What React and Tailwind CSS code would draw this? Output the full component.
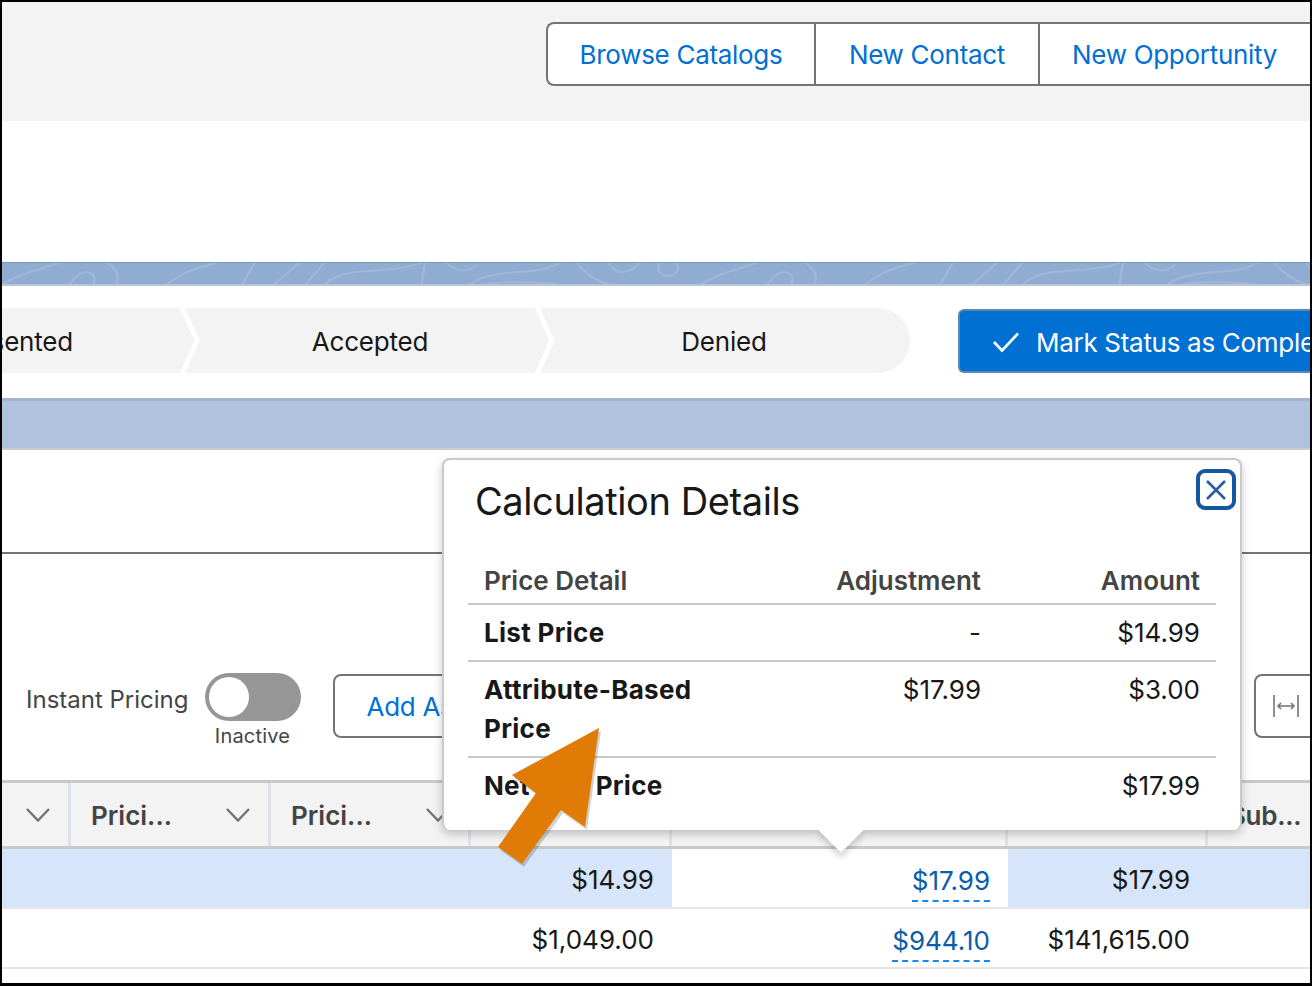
const FONT = "font-['Inter','Liberation_Sans',sans-serif]";

function Chevron({ className = "" }) {
  return (
    <svg width="26" height="16" viewBox="0 0 26 16" className={className} fill="none">
      <path d="M2 2 L13 13.5 L24 2" stroke="#747474" strokeWidth="2.4" />
    </svg>
  );
}

function Contours() {
  const tile = [
    "M0 22 C10 13 25 8 45 0",
    "M53 22 Q62 6 70 10 Q75 14 72 22",
    "M84 0 Q95 10 90 22",
    "M130 22 Q145 6 170 0",
    "M190 22 L200 0",
    "M215 22 L235 0",
    "M240 22 L255 0",
    "M255 22 Q265 9 290 8 Q320 6 332 0",
    "M332 22 L335 0",
    "M352 0 Q365 14 376 2",
    "M370 22 Q380 10 420 8 Q432 6 442 0",
    "M380 22 Q400 16 445 22",
    "M455 0 Q470 22 488 22",
    "M480 0 Q490 18 505 0",
    "M520 0 Q518 14 530 13 Q538 8 534 0",
  ];
  return (
    <svg width="1400" height="22" viewBox="0 0 1400 22" fill="none" className="block">
      {[0, 698].map((x) => (
        <g key={x} transform={`translate(${x} 0) scale(1.263 1)`}>
          {tile.map((d) => (
            <path key={d} d={d} stroke="#a0b8d7" strokeWidth="1.8" />
          ))}
        </g>
      ))}
    </svg>
  );
}

function PathStep({ children, className = "" }) {
  return (
    <div className={`relative flex h-full items-center whitespace-nowrap pt-[2px] text-[26px] tracking-[-0.2px] text-[#181818] ${className}`}>
      {children}
    </div>
  );
}

function Separator() {
  return (
    <svg width="24" height="65" viewBox="0 0 24 65" fill="none" className="absolute right-[-12px] top-0 z-10">
      <path d="M3 -1 L18 32.5 L3 66" stroke="#ffffff" strokeWidth="5" />
    </svg>
  );
}

function HeaderCell({ label, chevron, className = "" }) {
  return (
    <div className={`flex items-center justify-between border-r-[3px] border-[#dfe3e8] pt-[1px] ${className}`}>
      {label ? <span className="text-[26px] font-semibold text-[#444444]">{label}</span> : <span />}
      {chevron ? <Chevron /> : null}
    </div>
  );
}

function Amount({ children, className = "" }) {
  return <div className={`flex items-center justify-end pr-[18px] pt-[2px] text-[26px] text-[#181818] ${className}`}>{children}</div>;
}

function DashedLink({ children }) {
  return (
    <span className="mt-[6px] border-b-2 border-dashed border-[#1589ee] text-[26px] leading-[38px] text-[#0b5cab]">{children}</span>
  );
}

const gridCols = "grid grid-cols-[69px_200px_200px_201px_336px_200px_1fr]";
const popRow = "grid grid-cols-[282px_231px_1fr] border-b-2 border-[#c9c9c9] text-[26px] leading-[39px]";

function Popover() {
  return (
    <div className="absolute left-[440px] top-[456px] z-20 h-[372px] w-[800px] rounded-lg border-2 border-b-0 border-[#c9c9c9] bg-white shadow-[0_4px_10px_rgba(0,0,0,0.22)]">
      <div
        className="absolute bottom-[-16px] left-[381px] h-[32px] w-[32px] rotate-45 bg-white shadow-[4px_4px_6px_rgba(0,0,0,0.16)]"
      />
      <div className="relative flex h-full flex-col rounded-lg bg-white px-6 pt-[17px]">
        <div className="flex items-start justify-between">
          <h2 className="pl-[7px] text-[38px] leading-[48px] font-normal tracking-[-0.4px] text-[#181818]">Calculation Details</h2>
          <button className="mr-[-20px] mt-[-8px] flex h-[41px] w-[40px] items-center justify-center rounded-[9px] border-4 border-[#14569f] bg-white">
            <svg width="22" height="22" viewBox="0 0 22 22" fill="none">
              <path d="M2 2 L20 20 M20 2 L2 20" stroke="#2a5d9f" strokeWidth="2.6" />
            </svg>
          </button>
        </div>
        <div className="mt-[36px]">
          <div className={`${popRow} h-[44px] font-semibold text-[#444444]`}>
            <div className="pl-4">Price Detail</div>
            <div className="text-right">Adjustment</div>
            <div className="pr-4 text-right">Amount</div>
          </div>
          <div className={`${popRow} h-[57px] items-center text-[#181818]`}>
            <div className="pl-4 font-bold tracking-[0.3px]">List Price</div>
            <div className="text-right">-</div>
            <div className="pr-4 text-right">$14.99</div>
          </div>
          <div className={`${popRow} h-[96px] pt-[8px] text-[#181818]`}>
            <div className="pl-4 font-bold tracking-[0.3px]">
              Attribute-Based
              <br />
              Price
            </div>
            <div className="text-right">$17.99</div>
            <div className="pr-4 text-right">$3.00</div>
          </div>
          <div className="grid h-[57px] grid-cols-[282px_231px_1fr] items-center pb-[2px] text-[26px] leading-[39px] text-[#181818]">
            <div className="pl-4 font-bold tracking-[0.3px]">Net Unit Price</div>
            <div />
            <div className="pr-4 text-right">$17.99</div>
          </div>
        </div>
      </div>
    </div>
  );
}

function OrangeArrow() {
  return (
    <svg width="1308" height="981" viewBox="2 2 1308 981" className="pointer-events-none absolute left-0 top-0 z-30" fill="none">
      <path d="M599 728 L512 775 L536 793 L498 847 L522 864 L561 810 L585 827 Z" fill="rgba(0,0,0,0.18)" transform="translate(2 3)" />
      <path d="M599 728 L512 775 L536 793 L498 847 L522 864 L561 810 L585 827 Z" fill="#e07c05" />
    </svg>
  );
}

export default function App() {
  return (
    <div className={`h-[986px] w-[1312px] overflow-hidden border-2 border-b-[3px] border-black bg-white ${FONT}`}>
      <div className="relative flex h-full flex-col">
        <section className="flex h-[119px] shrink-0 justify-end bg-[#f3f3f3] pt-[20px]">
          <div className="flex h-[64px] w-[764px] shrink-0 rounded-l-lg border-2 border-r-0 border-[#747474] bg-white text-[26px] tracking-[-0.3px] text-[#0070d2]">
            <div className="flex w-[268px] items-center justify-center border-r-2 border-[#747474]">Browse Catalogs</div>
            <div className="flex w-[224px] items-center justify-center border-r-2 border-[#747474]">New Contact</div>
            <div className="flex flex-1 items-center pl-[32px]">New Opportunity</div>
          </div>
        </section>

        <section className="h-[141px] shrink-0 bg-white" />

        <section className="h-[24px] shrink-0 overflow-hidden border-b-2 border-t border-b-[#bcc6d3] border-t-[#7d97b8] bg-[#8fadd3]">
          <Contours />
        </section>

        <section className="flex h-[112px] shrink-0 items-start pt-[22px]">
          <div className="flex h-[65px] w-[908px] shrink-0 rounded-r-[33px] bg-[#f3f3f3]">
            <PathStep className="w-[189px] justify-end pr-[118px]">
              Presented
              <Separator />
            </PathStep>
            <PathStep className="w-[355px] justify-center pl-[3px]">
              Accepted
              <Separator />
            </PathStep>
            <PathStep className="flex-1 justify-center pr-[8px]">Denied</PathStep>
          </div>
          <button className="ml-[48px] mt-[1px] flex h-[64px] w-[400px] shrink-0 items-center rounded-l-md border-2 border-r-0 border-[#5e86b0] bg-[#0070d2] pl-[32px] pt-[2px] text-[26px] tracking-[-0.3px] whitespace-nowrap text-white">
            <svg width="28" height="22" viewBox="0 0 28 22" fill="none" className="mr-[16px] shrink-0">
              <path d="M2 11 L10 19.5 L26 2.5" stroke="#ffffff" strokeWidth="2.6" />
            </svg>
            Mark Status as Complete
          </button>
        </section>

        <section className="h-[52px] shrink-0 border-t-[3px] border-b-2 border-t-[#a5b4c6] border-b-[#c8ced6] bg-[#afc3df]" />

        <section className="h-[104px] shrink-0 border-b-2 border-[#747474] bg-white" />

        <section className="flex h-[226px] shrink-0 items-start bg-white pl-[24px] pt-[119px]">
          <span className="mt-[9px] text-[24px] leading-[36px] text-[#444444]">Instant Pricing</span>
          <div className="ml-[16px] flex flex-col items-center">
            <div className="flex h-[48px] w-[96px] items-center rounded-full bg-[#969696] pl-[4px]">
              <div className="h-[40px] w-[40px] rounded-full bg-white" />
            </div>
            <span className="mt-[1px] text-[20px] leading-[28px] tracking-[0.2px] text-[#444444]">Inactive</span>
          </div>
          <button className="ml-[32px] mt-[1px] flex h-[64px] w-[200px] shrink-0 items-center rounded-lg border-2 border-[#747474] bg-white pl-[32px] text-[26px] tracking-[-0.3px] whitespace-nowrap text-[#0070d2]">
            Add Assets
          </button>
          <button className="ml-auto mt-[1px] flex h-[64px] w-[56px] shrink-0 items-center rounded-l-lg border-2 border-r-0 border-[#747474] bg-white pl-[16px]">
            <svg width="28" height="26" viewBox="0 0 28 26" fill="none">
              <path d="M2 2 V24 M26 2 V24 M6 13 H22 M9 10 L6 13 L9 16 M19 10 L22 13 L19 16" stroke="#747474" strokeWidth="1.6" />
            </svg>
          </button>
        </section>

        <section className={`${gridCols} h-[69px] shrink-0 border-t-[3px] border-b-[3px] border-[#c9c9c9] bg-[#f3f3f3]`}>
          <HeaderCell chevron className="pr-[17px]" />
          <HeaderCell label="Prici..." chevron className="pl-[20px] pr-[17px]" />
          <HeaderCell label="Prici..." chevron className="pl-[20px] pr-[17px]" />
          <HeaderCell />
          <HeaderCell />
          <HeaderCell />
          <div className="flex items-center pl-[21px] pt-[1px] text-[26px] font-semibold tracking-[-0.3px] text-[#444444]">Sub...</div>
        </section>

        <section className={`${gridCols} h-[60px] shrink-0 border-b-2 border-[#e5e5e5] bg-[#d7e5fa]`}>
          <div />
          <div />
          <div />
          <Amount>$14.99</Amount>
          <Amount className="bg-white"><DashedLink>$17.99</DashedLink></Amount>
          <Amount>$17.99</Amount>
          <div />
        </section>

        <section className={`${gridCols} h-[60px] shrink-0 border-b-2 border-[#e5e5e5] bg-white`}>
          <div />
          <div />
          <div />
          <Amount>$1,049.00</Amount>
          <Amount><DashedLink>$944.10</DashedLink></Amount>
          <Amount>$141,615.00</Amount>
          <div />
        </section>

        <Popover />
        <OrangeArrow />
      </div>
    </div>
  );
}
